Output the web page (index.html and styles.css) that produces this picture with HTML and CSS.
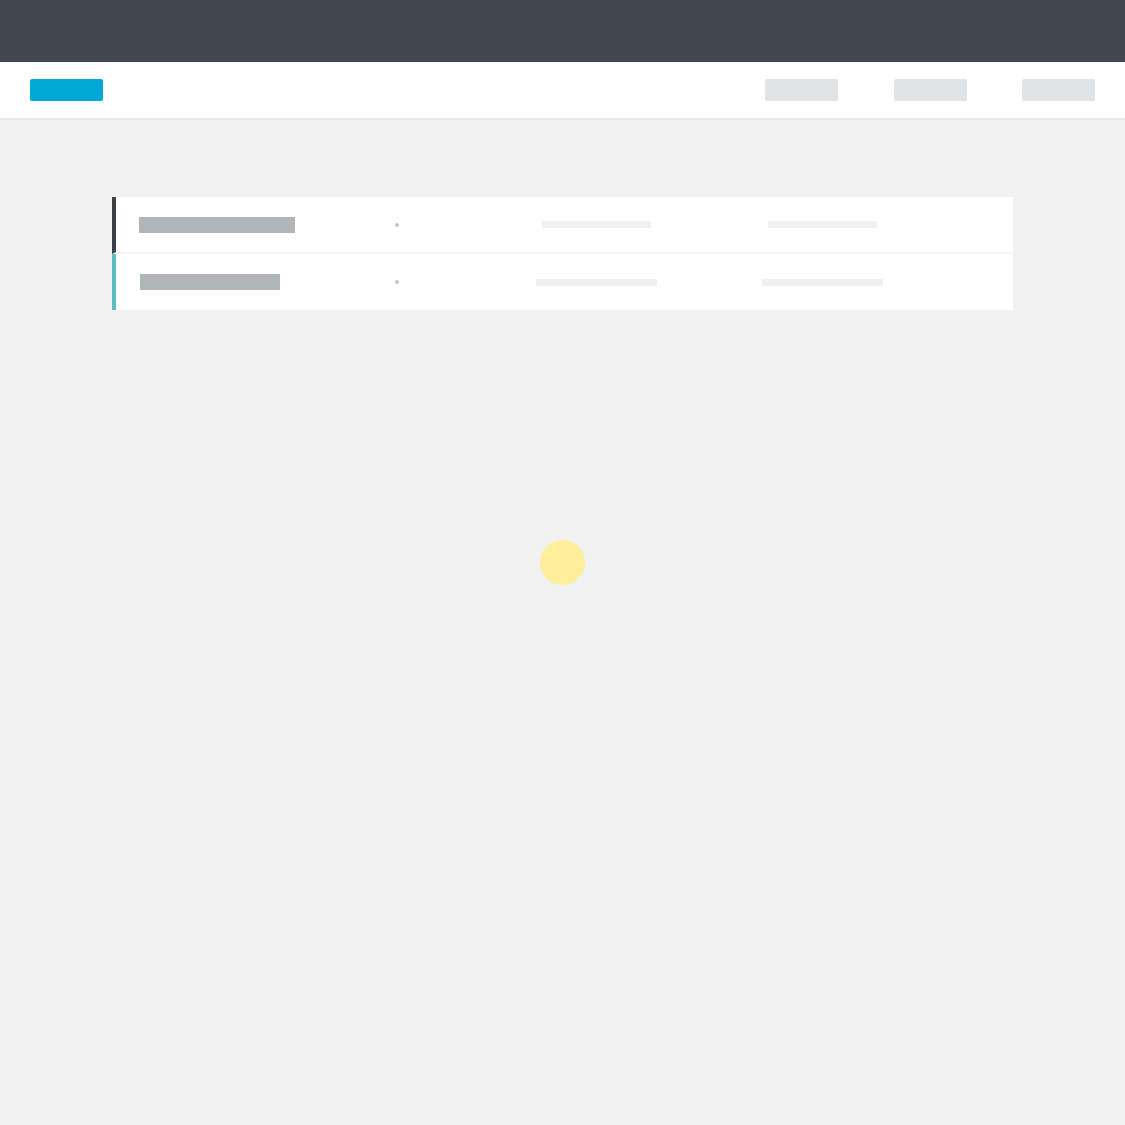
FILE: index.html
```html
<!DOCTYPE html>
<html lang="en">
<head>
<meta charset="utf-8">
<title>Loading</title>
<link rel="stylesheet" href="styles.css">
</head>
<body>
<div class="topbar"></div>
<header class="nav">
  <div class="logo"></div>
  <div class="nav-links">
    <span class="pill"></span>
    <span class="pill"></span>
    <span class="pill"></span>
  </div>
</header>
<main class="main">
  <div class="table">
    <div class="row row-dark">
      <div class="cell cell-name"><span class="bar bar-a"></span></div>
      <div class="cell cell-center"><span class="dot"></span></div>
      <div class="cell cell-center"><span class="line line-a"></span></div>
      <div class="cell cell-center"><span class="line line-a"></span></div>
      <div class="cell"></div>
    </div>
    <div class="row row-teal">
      <div class="cell cell-name cell-name-b"><span class="bar bar-b"></span></div>
      <div class="cell cell-center"><span class="dot"></span></div>
      <div class="cell cell-center"><span class="line line-b"></span></div>
      <div class="cell cell-center"><span class="line line-b"></span></div>
      <div class="cell"></div>
    </div>
  </div>
</main>
<div class="spinner"></div>
</body>
</html>
```

FILE: styles.css
```css
* { box-sizing: border-box; }
html, body {
  margin: 0;
  padding: 0;
  background: #f1f1f1;
  font-family: "Open Sans", "Liberation Sans", sans-serif;
  min-height: 1125px;
}
.topbar {
  height: 62px;
  background: #414750;
}
.nav {
  height: 58px;
  background: #ffffff;
  border-bottom: 2px solid #e8e8e8;
  display: flex;
  align-items: center;
  justify-content: space-between;
  padding: 0 30px 0 30px;
}
.logo {
  width: 73px;
  height: 22px;
  border-radius: 2px;
  background: #00a9d5;
}
.nav-links {
  display: flex;
  gap: 55.5px;
}
.pill {
  display: block;
  width: 73px;
  height: 22px;
  border-radius: 2px;
  background: #e2e3e4;
}
.main {
  padding: 77px 0 0 112px;
}
.table {
  width: 901px;
  display: flex;
  flex-direction: column;
}
.row {
  display: grid;
  grid-template-columns: 232px 98px 300px 152px 1fr;
  align-items: center;
  background: #ffffff;
  border-left: 4px solid #3b4149;
}
.row-dark {
  height: 57px;
  border-bottom: 2px solid #f6f6f6;
}
.row-teal {
  height: 56px;
  border-left-color: #5bbfc1;
}
.cell {
  display: flex;
  align-items: center;
  height: 100%;
}
.cell-name { padding-left: 23px; }
.cell-name-b { padding-left: 24px; }
.cell-center { justify-content: center; }
.bar {
  display: block;
  height: 16px;
  background: #b0b5b8;
}
.bar-a { width: 156px; }
.bar-b { width: 140px; }
.dot {
  display: block;
  width: 4px;
  height: 4px;
  border-radius: 50%;
  background: #c3c6c9;
}
.line {
  display: block;
  height: 7px;
  background: #eff0f2;
}
.line-a { width: 109px; }
.line-b { width: 121px; }
.spinner {
  position: absolute;
  left: 540px;
  top: 540px;
  width: 45px;
  height: 45px;
  border-radius: 50%;
  background: #fdee9b;
}
```
